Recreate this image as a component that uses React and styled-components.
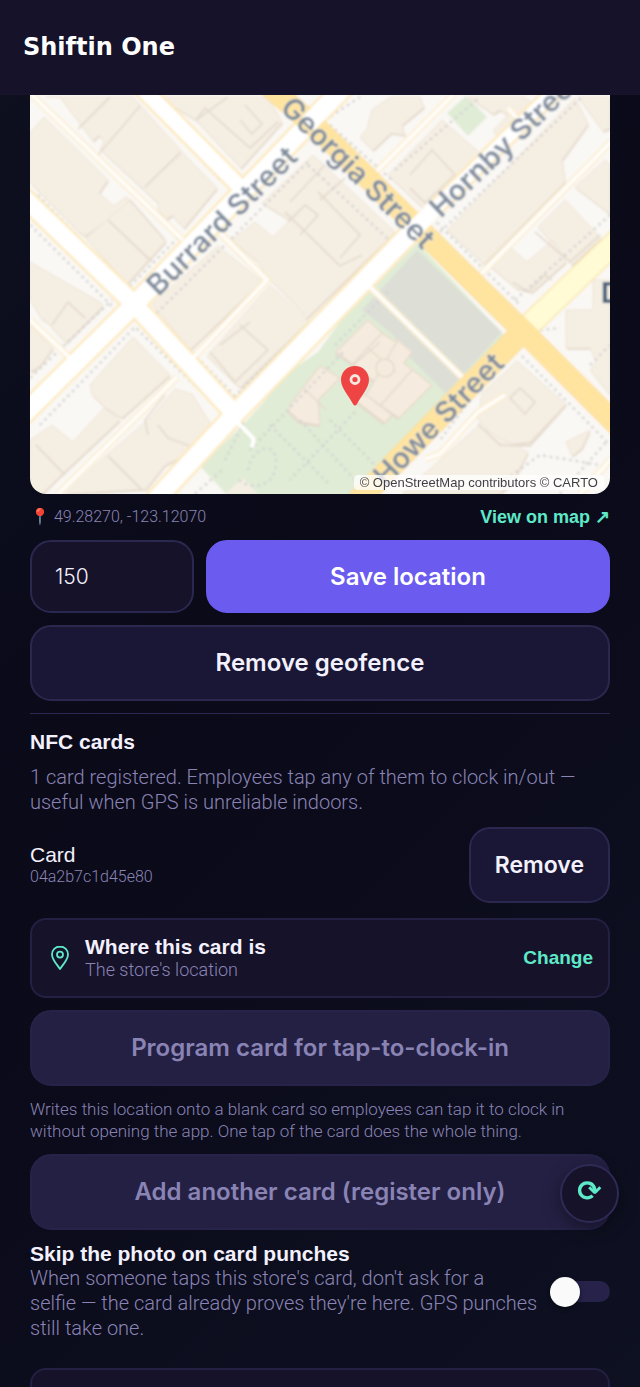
import { useState } from 'react';
import styled, { createGlobalStyle } from 'styled-components';

const GlobalStyle = createGlobalStyle`
  *, *::before, *::after {
    box-sizing: border-box;
  }

  body {
    margin: 0;
    background: #0a0a18;
  }

  h1, h2, h3, p {
    margin: 0;
  }
`;

const ui = '"Liberation Sans", Arial, sans-serif';
const display = 'Inter, "Liberation Sans", sans-serif';
const light = 'Roboto, "Liberation Sans", sans-serif';

// footprints, one polygon each
const buildings = [
  '30,133 44,117 108,180 99,193 114,206 126,197 130,200 108,220 85,236 79,232 30,182',
  '130,200 166,241 127,284 86,238',
  '46,97 60,97 93,141 99,135 104,141 100,149 143,189 182,152 133,97',
  '143,189 182,152 217,188 184,228 172,215 167,219 158,210 158,203',
  '158,97 268,97 282,122 241,168 196,120',
  '313,155 395,232 300,325 303,312 266,276 258,262 232,240 255,222 273,237 290,220 262,203',
  '218,246 262,281 190,350 152,304',
  '270,285 306,318 308,322 240,388 207,356',
  '30,262 100,302 103,306 66,343 47,322 41,318 30,300',
  '30,325 53,348 40,366 30,372',
  '133,337 170,375 122,418 106,408 92,395 90,385',
  '30,440 52,425 73,442 104,408 120,420 58,478 42,494 30,494',
  '150,418 175,389 192,394 212,426 192,452 165,465 146,489 65,494 95,465',
  '372,110 390,97 420,97 424,107 402,125 405,135 391,133 373,150 360,137 367,129',
  '442,120 482,155 423,208 388,175',
  '468,97 524,97 535,104 502,140 493,131 508,115 500,110 493,114',
  '575,98 588,124 562,160 565,182 484,264 447,230',
  '578,97 610,97 610,128 603,131',
  '538,227 565,200 601,238 572,265',
  '490,266 510,247 527,262 553,240 566,262 532,292 516,288',
  '575,187 605,160 610,164 610,214',
  '566,310 593,310 593,280 610,280 610,395 590,370 596,362 590,348 566,348',
  '517,361 566,404 530,442 503,445 478,420 482,393',
  '478,426 528,452 514,480 500,494 402,494',
  '566,442 590,430 582,448 572,456',
];

const libraryParts = [
  '368,320 382,333 353,364 336,352',
  '382,333 412,352 380,386 353,364',
  '398,340 412,352 404,363 432,385 399,418 366,395',
  '320,366 340,378 318,400 320,425 300,422 288,410 292,402',
  '366,395 392,415 385,423 352,398',
];

const roofLines = [
  '78,129 110,97', '98,155 140,106', '145,187 180,153', '108,220 152,262', '130,200 165,240',
  '196,120 228,97', '196,120 205,108 250,148 278,122', '240,120 252,134 262,124 245,105',
  '290,202 325,165', '320,200 345,178', '288,222 305,205 318,215 300,235', '285,212 340,266 362,255',
  '318,192 360,235 340,258', '410,175 432,150 455,175 425,203 410,188', '535,232 570,262 600,235',
  '513,282 528,292 545,275 552,280', '520,388 535,402 525,414 510,398 520,388', '240,325 268,350 235,382 210,352',
  '220,345 250,322', '36,445 65,475', '108,456 142,490', '158,425 168,438 190,446', '165,395 145,420 148,435',
  '52,325 68,302 85,318', '478,424 500,445 530,446 566,406',
];

const footpaths = [
  'M30 225 L118 312', 'M38 195 L128 288 L178 238', 'M140 97 L222 182', 'M40 425 L135 327 L222 412',
  'M152 318 L310 160', 'M150 310 L235 396 L262 370', 'M246 384 L395 240', 'M308 165 L400 250',
  'M325 120 L360 97', 'M330 125 L392 180', 'M395 170 L480 97', 'M440 232 L582 97', 'M432 218 L520 305',
  'M30 378 L112 300', 'M515 300 L610 215', 'M565 305 L610 260', 'M522 356 L610 445', 'M590 365 L610 345',
  'M250 450 L345 350', 'M270 425 L330 485', 'M300 420 L355 480', 'M330 420 L375 465', 'M355 412 L290 480',
  'M248 470 C252 445 278 440 276 465 S245 490 238 478', 'M195 494 L222 470', 'M505 480 L540 455 L600 465',
  'M470 400 L440 440', 'M335 345 L390 290', 'M540 330 L560 328', 'M560 494 L608 440', 'M225 460 L245 420',
];

const whiteRoads = [
  { d: 'M20 194 L133 303 L233 412', w: 19 },
  { d: 'M140 86 L243 190', w: 17 },
  { d: 'M20 418 L132 307 L345 86', w: 20 },
  { d: 'M150 506 L233 416 L423 220', w: 20 },
  { d: 'M423 220 L560 86', w: 15 },
];

const lanes = [
  'M30 93 L183 240', 'M220 233 L267 280 L193 358', 'M30 320 L70 358', 'M177 377 L58 494', 'M370 178 L455 93',
  'M472 283 L612 141', 'M370 287 L464 379', 'M508 108 L517 118', 'M505 395 L478 412 L440 454 L425 459', 'M580 494 L612 458',
];

const yellowRoads = [
  { d: 'M262 80 L320 131 L471 280 L523 331 L622 430', w: 20 },
  { d: 'M523 331 L355 504', w: 21 },
];

const StreetMap = () => (
  <MapSvg viewBox="30 95 580 399" preserveAspectRatio="xMidYMid slice" role="img" aria-label="Store location map">
    <defs>
      <filter id="tile" x="0" y="0" width="100%" height="100%">
        <feGaussianBlur stdDeviation="0.8" />
      </filter>
    </defs>
    <g filter="url(#tile)">
      <rect x="20" y="85" width="600" height="420" fill="#faf8f4" />
      <polygon points="447,113 466,96 487,117 468,136" fill="#e0ecd5" />
      <polygon points="417,243 340,322 318,352 286,374 262,404 243,425 200,466 228,496 352,496 505,336" fill="#e0ecd5" />
      <polygon points="417,250 502,332 446,394 410,358 394,336 362,310" fill="#dddfd7" />
      <polygon points="243,478 258,494 225,494" fill="#f5eee3" />

      {buildings.map((points) => (
        <g key={points}>
          <polygon points={points} fill="#e6dccf" transform="translate(1 2)" />
          <polygon points={points} fill="#f5eee3" stroke="#eee4d7" strokeWidth="1" />
        </g>
      ))}
      {libraryParts.map((points) => (
        <g key={points}>
          <polygon points={points} fill="#e3d8cb" transform="translate(-1 2)" />
          <polygon points={points} fill="#f5ecdf" stroke="#e8dccf" strokeWidth="1.5" />
        </g>
      ))}
      <path d="M368 348 L396 372 M352 366 L380 342 M380 406 L412 370 M304 388 L326 410" stroke="#e6dacc" strokeWidth="1.5" />
      <circle cx="385" cy="368" r="9" fill="#f5ecdf" stroke="#e6dacc" strokeWidth="1.5" />
      {roofLines.map((points) => (
        <polyline key={points} points={points} fill="none" stroke="#e6dccf" strokeWidth="1.8" />
      ))}
      {footpaths.map((d) => (
        <path key={d} d={d} fill="none" stroke="#d3d3d3" strokeWidth="2.4" strokeDasharray="2.6 4" />
      ))}

      {lanes.map((d) => (
        <path key={d} d={d} fill="none" stroke="#fbeccb" strokeWidth="7" />
      ))}
      {whiteRoads.map((r) => (
        <path key={r.d} d={r.d} fill="none" stroke="#fdeac0" strokeWidth={r.w + 3} />
      ))}
      <path d="M523 331 L622 236" fill="none" stroke="#fbe8b4" strokeWidth="24" />
      {lanes.map((d) => (
        <path key={d} d={d} fill="none" stroke="#fffdfa" strokeWidth="4" />
      ))}
      {whiteRoads.map((r) => (
        <path key={r.d} d={r.d} fill="none" stroke="#fff" strokeWidth={r.w - 2} />
      ))}
      <path d="M238 423 L252 437 Q256 441 251 447" fill="none" stroke="#fff" strokeWidth="4" />
      <path d="M523 331 L622 236" fill="none" stroke="#fffbd5" strokeWidth="21" />
      {yellowRoads.map((r) => (
        <path key={r.d} d={r.d} fill="none" stroke="#fbdc95" strokeWidth={r.w + 2} />
      ))}
      {yellowRoads.map((r) => (
        <path key={r.d} d={r.d} fill="none" stroke="#ffe4a0" strokeWidth={r.w} />
      ))}
      <path d="M308 124 L345 86" fill="none" stroke="#fff" strokeWidth="18" />
      <path d="M404 240 L436 207" fill="none" stroke="#fff" strokeWidth="17" />

      <StreetName transform="translate(229 228) rotate(-44.5)" textAnchor="middle">Burrard Street</StreetName>
      <StreetName transform="translate(351 180) rotate(44.5)" textAnchor="middle">Georgia Street</StreetName>
      <StreetName transform="translate(441 219) rotate(-43.5)">Hornby Street</StreetName>
      <StreetName transform="translate(506 365) rotate(-45.5)" textAnchor="end">Howe Street</StreetName>
      <PlaceName x="601" y="303">D</PlaceName>
    </g>
    <path
      d="M355 366 C347 366 341 372 341 380 C341 388 349 396 353 404 Q355 407 357 404 C361 396 369 388 369 380 C369 372 363 366 355 366 Z"
      fill="#ef4444"
    />
    <circle cx="355" cy="379.5" r="4" fill="none" stroke="#fbe6df" strokeWidth="2.8" />
  </MapSvg>
);

const PinIcon = () => (
  <svg width="20" height="26" viewBox="0 0 20 26" fill="none" stroke="#5ee9c8" strokeWidth="1.8" aria-hidden="true">
    <path d="M10 1.5 C5.2 1.5 2 5 2 9.4 C2 14.5 7 19.5 10 24 C13 19.5 18 14.5 18 9.4 C18 5 14.8 1.5 10 1.5 Z" strokeLinejoin="round" />
    <circle cx="10" cy="9.6" r="3" />
  </svg>
);

const App = () => {
  const [radius, setRadius] = useState('150');
  const [skipPhoto, setSkipPhoto] = useState(false);

  return (
    <Shell>
      <GlobalStyle />
      <Header>
        <Brand>Shiftin One</Brand>
      </Header>

      <Content>
        <MapFrame>
          <StreetMap />
          <Attribution>© OpenStreetMap contributors © CARTO</Attribution>
        </MapFrame>

        <CoordsRow>
          <Coords>📍 49.28270, -123.12070</Coords>
          <MapLink href="#map">View on map ↗</MapLink>
        </CoordsRow>

        <RadiusRow>
          <RadiusInput
            type="text"
            inputMode="numeric"
            aria-label="Geofence radius"
            value={radius}
            onChange={(e) => setRadius(e.target.value)}
          />
          <Button type="button" $variant="primary">Save location</Button>
        </RadiusRow>
        <Button type="button">Remove geofence</Button>

        <Divider />

        <section>
          <SectionTitle>NFC cards</SectionTitle>
          <Copy>
            1 card registered. Employees tap any of them to clock in/out — useful when GPS is unreliable indoors.
          </Copy>
        </section>

        <CardRow>
          <div>
            <CardName>Card</CardName>
            <CardId>04a2b7c1d45e80</CardId>
          </div>
          <Button type="button">Remove</Button>
        </CardRow>

        <Panel>
          <PinIcon />
          <PanelText>
            <Label as="h3">Where this card is</Label>
            <PanelNote>The store's location</PanelNote>
          </PanelText>
          <TextButton type="button">Change</TextButton>
        </Panel>

        <Button type="button" disabled>Program card for tap-to-clock-in</Button>
        <Hint>
          Writes this location onto a blank card so employees can tap it to clock in without opening the app. One tap
          of the card does the whole thing.
        </Hint>
        <Button type="button" disabled>Add another card (register only)</Button>

        <ToggleRow>
          <div>
            <Label as="label" htmlFor="skip-photo">Skip the photo on card punches</Label>
            <Copy>
              When someone taps this store's card, don't ask for a selfie&nbsp;— the card already proves they're here.
              GPS punches still take one.
            </Copy>
          </div>
          <Switch
            id="skip-photo"
            type="checkbox"
            checked={skipPhoto}
            onChange={(e) => setSkipPhoto(e.target.checked)}
          />
        </ToggleRow>

        <NextPanel />
      </Content>

      <RefreshButton type="button" aria-label="Refresh">⟳</RefreshButton>
    </Shell>
  );
};

const Shell = styled.div`
  display: flex;
  flex-direction: column;
  height: 100vh;
  background: linear-gradient(135deg, #0e1020 0%, #0a0a19 40%, #0b0b1b 60%, #0e1122 100%);
  color: #f3f1fd;
  font-family: ${ui};
`;

const Header = styled.header`
  flex: none;
  padding: 32px 23px;
  background: #15122a;
  border-bottom: 1px solid #17142b;
`;

const Brand = styled.h1`
  font: 700 24px/30px "DejaVu Sans", sans-serif;
  color: #fff;
`;

const Content = styled.main`
  flex: 1;
  min-height: 0;
  display: flex;
  flex-direction: column;
  gap: 12px;
  padding: 0 30px;
  overflow-y: auto;
  scrollbar-width: none;

  > * {
    flex: none;
  }
`;

const MapFrame = styled.div`
  position: relative;
  border-radius: 0 0 16px 16px;
  overflow: hidden;
`;

const MapSvg = styled.svg`
  display: block;
  width: 100%;
`;

const StreetName = styled.text`
  font: 600 29px Inter, sans-serif;
  fill: #808c9c;
  stroke: rgba(255, 255, 255, 0.4);
  stroke-width: 2px;
  paint-order: stroke;
`;

const PlaceName = styled.text`
  font: 700 28px Inter, sans-serif;
  fill: #46607c;
`;

const Attribution = styled.span`
  position: absolute;
  right: 6px;
  bottom: 4px;
  padding: 0 6px;
  border-radius: 4px;
  background: rgba(255, 255, 255, 0.75);
  color: #3f3f46;
  font-size: 13px;
  line-height: 15px;
`;

const CoordsRow = styled.div`
  display: flex;
  align-items: center;
  justify-content: space-between;
  line-height: 22px;
`;

const Coords = styled.span`
  font-family: ${light};
  font-weight: 300;
  font-size: 16px;
  color: #8a84b5;
`;

const MapLink = styled.a`
  font-size: 18px;
  font-weight: 700;
  color: #5ee9c8;
  text-decoration: none;
`;

const RadiusRow = styled.div`
  display: grid;
  grid-template-columns: 164px 1fr;
  gap: 12px;
`;

const RadiusInput = styled.input`
  min-width: 0;
  height: 73px;
  padding: 0 23px;
  border: 2px solid #2b2850;
  border-radius: 21px;
  background: #15122a;
  color: #f3f1fd;
  font: 300 21px ${display};
`;

const variants = {
  primary: 'background: #6b5bef; border-color: #6b5bef; color: #fff; min-height: 73px;',
  plain: 'background: #191735; border-color: #2b2850; color: #f3f1fd;',
};

const Button = styled.button`
  min-height: 76px;
  padding: 0 24px;
  border: 2px solid;
  border-radius: 21px;
  font: 600 24px/30px ${display};
  cursor: pointer;
  ${({ $variant = 'plain' }) => variants[$variant]}

  &:disabled {
    background: #242044;
    border-color: #262248;
    color: #8a84b5;
    cursor: default;
  }
`;

const Divider = styled.hr`
  width: 100%;
  margin: 0;
  border: 0;
  border-top: 1px solid #2b2850;
`;

const SectionTitle = styled.h2`
  margin-bottom: 8px;
  font-size: 21px;
  line-height: 31px;
`;

const Copy = styled.p`
  font: 300 20px/25px ${light};
  color: #8a84b5;
`;

const CardRow = styled.div`
  display: flex;
  align-items: center;
  justify-content: space-between;
  margin-bottom: 3px;

  button {
    font-size: 23px;
  }
`;

const CardName = styled.div`
  font-size: 21px;
  line-height: 24px;
`;

const CardId = styled.div`
  font: 300 16px/20px ${light};
  color: #8a84b5;
`;

const Panel = styled.div`
  display: flex;
  align-items: center;
  gap: 15px;
  min-height: 80px;
  padding: 0 15px 0 18px;
  border: 2px solid #242044;
  border-radius: 16px;
  background: #15122a;
`;

const PanelText = styled.div`
  flex: 1;
`;

const Label = styled.span`
  display: block;
  font-size: 21px;
  font-weight: 700;
  line-height: 24px;
`;

const PanelNote = styled.p`
  font: 300 18px/22px ${light};
  color: #8a84b5;
`;

const TextButton = styled.button`
  padding: 0;
  border: 0;
  background: none;
  font: 700 19px/24px ${ui};
  color: #5ee9c8;
  cursor: pointer;
`;

const Hint = styled.p`
  font: 300 17px/22px ${light};
  color: #8a84b5;
`;

const ToggleRow = styled.div`
  display: flex;
  align-items: center;
  gap: 12px;
  margin-bottom: 15px;

  > div {
    flex: 1;
  }
`;

const Switch = styled.input`
  appearance: none;
  display: grid;
  align-items: center;
  width: 60px;
  height: 30px;
  margin: 0;
  cursor: pointer;

  &::before,
  &::after {
    content: '';
    grid-area: 1 / 1;
    border-radius: 15px;
  }

  &::before {
    height: 21px;
    background: ${({ checked }) => (checked ? '#6b5bef' : '#26224a')};
  }

  &::after {
    width: 30px;
    height: 30px;
    justify-self: ${({ checked }) => (checked ? 'end' : 'start')};
    background: #fafafa;
    box-shadow: 0 2px 4px rgba(0, 0, 0, 0.5);
  }
`;

const NextPanel = styled(Panel)`
  min-height: 160px;
`;

const RefreshButton = styled.button`
  position: fixed;
  right: 21px;
  bottom: 164px;
  display: flex;
  align-items: center;
  justify-content: center;
  width: 59px;
  height: 59px;
  padding: 0 0 4px;
  border: 2px solid #2e2a56;
  border-radius: 50%;
  background: #15122a;
  box-shadow: 0 5px 18px rgba(0, 0, 0, 0.4);
  color: #5ee9c8;
  font: 700 29px/1 "DejaVu Sans", sans-serif;
  cursor: pointer;
`;

export default App;
